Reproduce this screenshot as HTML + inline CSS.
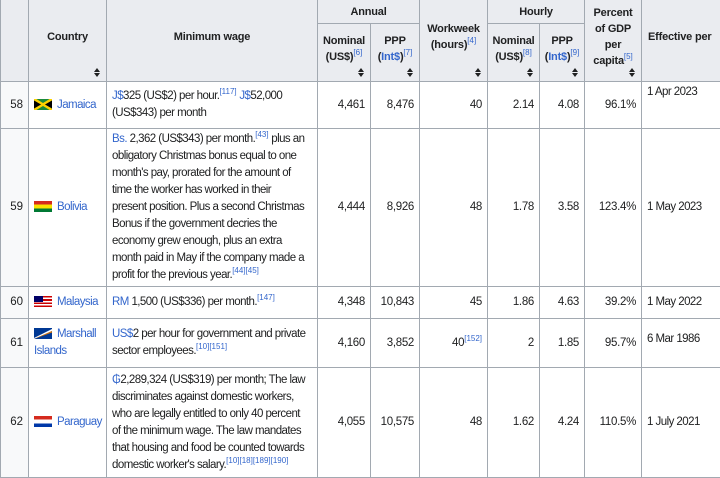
<!DOCTYPE html>
<html><head><meta charset="utf-8">
<style>
html,body{margin:0;padding:0;background:#fff;}
body{width:720px;height:474px;overflow:hidden;font-family:"Liberation Sans",Arial,sans-serif;font-size:11px;color:#202122;}
table{border-collapse:collapse;table-layout:fixed;width:760px;position:absolute;left:0;top:-1px;}
td,th{border:1px solid #a2a9b1;padding:2px 5px;line-height:17px;}
td{letter-spacing:-0.55px;font-size:11.5px;}
th{background:#eaecf0;font-weight:bold;text-align:center;vertical-align:middle;position:relative;line-height:16px;letter-spacing:-0.2px;padding:2px 3px 10px;}
td.n{text-align:right;vertical-align:middle;letter-spacing:-0.3px;}
td.idx{background:#f8f9fa;text-align:right;letter-spacing:0;}
a{color:#3366cc;text-decoration:none;}
sup{font-size:8px;line-height:0;vertical-align:5px;letter-spacing:0;}
sup a{color:#3366cc;}
.s{position:absolute;right:6px;bottom:4px;width:6px;height:9px;}
.fl{display:inline-block;width:18px;height:11px;vertical-align:-2px;margin-right:5px;}
.nw{white-space:nowrap;}
</style></head><body>
<table>
<colgroup>
<col style="width:28px"><col style="width:78px"><col style="width:211px"><col style="width:53px"><col style="width:49px"><col style="width:68px"><col style="width:52px"><col style="width:45px"><col style="width:57px"><col style="width:119px">
</colgroup>
<tr style="height:24px">
<th rowspan="2" style="background:#eaecf0"></th>
<th rowspan="2">Country<svg class="s" viewBox="0 0 6 9"><path d="M0 4L3 0L6 4ZM0 5L3 9L6 5Z" fill="#202122"/></svg></th>
<th rowspan="2">Minimum wage</th>
<th colspan="2" style="padding-bottom:2px">Annual</th>
<th rowspan="2">Workweek<br>(hours)<sup><a style="font-weight:normal">[4]</a></sup><svg class="s" viewBox="0 0 6 9"><path d="M0 4L3 0L6 4ZM0 5L3 9L6 5Z" fill="#202122"/></svg></th>
<th colspan="2" style="padding-bottom:2px">Hourly</th>
<th rowspan="2">Percent<br>of GDP<br>per<br>capita<sup><a style="font-weight:normal">[5]</a></sup><svg class="s" viewBox="0 0 6 9"><path d="M0 4L3 0L6 4ZM0 5L3 9L6 5Z" fill="#202122"/></svg></th>
<th rowspan="2" style="text-align:left;padding-left:6px">Effective per<svg class="s" style="right:auto;left:108px" viewBox="0 0 6 9"><path d="M0 4L3 0L6 4ZM0 5L3 9L6 5Z" fill="#202122"/></svg></th>
</tr>
<tr style="height:58px">
<th class="nw">Nominal<br>(US$)<sup><a style="font-weight:normal">[6]</a></sup><svg class="s" viewBox="0 0 6 9"><path d="M0 4L3 0L6 4ZM0 5L3 9L6 5Z" fill="#202122"/></svg></th>
<th class="nw">PPP<br>(<a>Int$</a>)<sup><a style="font-weight:normal">[7]</a></sup><svg class="s" viewBox="0 0 6 9"><path d="M0 4L3 0L6 4ZM0 5L3 9L6 5Z" fill="#202122"/></svg></th>
<th class="nw">Nominal<br>(US$)<sup><a style="font-weight:normal">[8]</a></sup><svg class="s" viewBox="0 0 6 9"><path d="M0 4L3 0L6 4ZM0 5L3 9L6 5Z" fill="#202122"/></svg></th>
<th class="nw">PPP<br>(<a>Int$</a>)<sup><a style="font-weight:normal">[9]</a></sup><svg class="s" viewBox="0 0 6 9"><path d="M0 4L3 0L6 4ZM0 5L3 9L6 5Z" fill="#202122"/></svg></th>
</tr>
<tr style="height:47px">
<td class="idx">58</td>
<td class="nw"><span class="fl" style="background:#1b8a3a;position:relative;overflow:hidden"><svg width="18" height="11" style="position:absolute;left:0;top:0"><path d="M0 0L18 11M18 0L0 11" stroke="#fed100" stroke-width="2.5"/><path d="M0 1.5L7 5.5L0 9.5Z M18 1.5L11 5.5L18 9.5Z" fill="#000"/></svg></span><a>Jamaica</a></td>
<td class="nw"><a>J$</a>325 (US$2) per hour.<sup><a>[117]</a></sup> <a>J$</a>52,000<br>(US$343) per month</td>
<td class="n">4,461</td><td class="n">8,476</td><td class="n">40</td><td class="n">2.14</td><td class="n">4.08</td><td class="n">96.1%</td>
<td style="vertical-align:top">1 Apr 2023</td>
</tr>
<tr style="height:158px">
<td class="idx">59</td>
<td class="nw"><span class="fl" style="background:linear-gradient(#d52b1e 0 33%,#f9e300 33% 67%,#007934 67%)"></span><a>Bolivia</a></td>
<td class="nw"><a>Bs.</a> 2,362 (US$343) per month.<sup><a>[43]</a></sup> plus an<br>obligatory Christmas bonus equal to one<br>month's pay, prorated for the amount of<br>time the worker has worked in their<br>present position. Plus a second Christmas<br>Bonus if the government decries the<br>economy grew enough, plus an extra<br>month paid in May if the company made a<br>profit for the previous year.<sup><a>[44][45]</a></sup></td>
<td class="n">4,444</td><td class="n">8,926</td><td class="n">48</td><td class="n">1.78</td><td class="n">3.58</td><td class="n">123.4%</td>
<td>1 May 2023</td>
</tr>
<tr style="height:32px">
<td class="idx">60</td>
<td class="nw"><span class="fl" style="background:repeating-linear-gradient(#cc0001 0 1.6px,#fff 1.6px 3.2px);position:relative"><span style="position:absolute;left:0;top:0;width:9px;height:6px;background:#010066"></span></span><a>Malaysia</a></td>
<td class="nw"><a>RM</a> 1,500 (US$336) per month.<sup><a>[147]</a></sup></td>
<td class="n">4,348</td><td class="n">10,843</td><td class="n">45</td><td class="n">1.86</td><td class="n">4.63</td><td class="n">39.2%</td>
<td>1 May 2022</td>
</tr>
<tr style="height:49px">
<td class="idx">61</td>
<td class="nw"><span class="fl" style="background:#003893;position:relative;overflow:hidden"><svg width="18" height="11" style="position:absolute;left:0;top:0"><path d="M0 10L18 1L18 3L0 11Z" fill="#fff"/><path d="M0 11L18 3L18 4.5Z" fill="#dd7500"/></svg></span><a>Marshall</a><br><a>Islands</a></td>
<td class="nw"><a>US$</a>2 per hour for government and private<br>sector employees.<sup><a>[10][151]</a></sup></td>
<td class="n">4,160</td><td class="n">3,852</td><td class="n">40<sup><a>[152]</a></sup></td><td class="n">2</td><td class="n">1.85</td><td class="n">95.7%</td>
<td style="vertical-align:top;padding-top:12px">6 Mar 1986</td>
</tr>
<tr style="height:110px">
<td class="idx">62</td>
<td class="nw"><span class="fl" style="background:linear-gradient(#d52b1e 0 33%,#fff 33% 67%,#0038a8 67%)"></span><a>Paraguay</a></td>
<td class="nw"><a>₲</a>2,289,324 (US$319) per month; The law<br>discriminates against domestic workers,<br>who are legally entitled to only 40 percent<br>of the minimum wage. The law mandates<br>that housing and food be counted towards<br>domestic worker's salary.<sup><a>[10][18][189][190]</a></sup></td>
<td class="n">4,055</td><td class="n">10,575</td><td class="n">48</td><td class="n">1.62</td><td class="n">4.24</td><td class="n">110.5%</td>
<td>1 July 2021</td>
</tr>
</table>
</body></html>
